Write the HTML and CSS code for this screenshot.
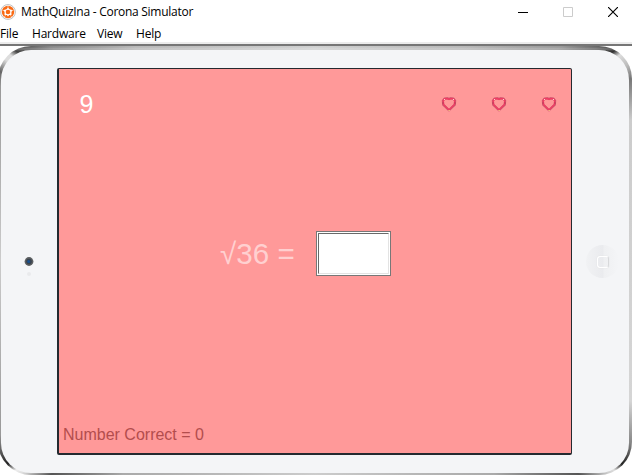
FILE: index.html
```html
<!DOCTYPE html>
<html lang="en">
<head>
<meta charset="utf-8">
<title>MathQuizIna - Corona Simulator</title>
<link rel="stylesheet" href="styles.css">
</head>
<body>
<svg class="defs" width="0" height="0" aria-hidden="true">
  <symbol id="heart" viewBox="0 0 16 16">
    <path d="M8 14.3 2.2 8.6 1.9 4.6 3.7 2.5 6.3 2.3 8 3.1 9.7 2.3 12.3 2.5 14.1 4.6 13.8 8.6Z" fill="none" stroke="#c9586d" stroke-width="2.2" stroke-linejoin="round"/>
    <path d="M8 14.1 2.5 8.5 2.2 4.7 3.8 2.7 6.2 2.5 8 3.4 9.8 2.5 12.2 2.7 13.8 4.7 13.5 8.5Z" fill="none" stroke="#f03c64" stroke-width="1.4" stroke-linejoin="round"/>
    <path d="M3 3.5h1M12 3.5h1" stroke="#ffd2d2" stroke-width="1"/>
    <path d="M2 6.5v1M14 6.5v1" stroke="#9d304b" stroke-width="1"/>
    <path d="M7.5 14.5h1.2" stroke="#ffe08c" stroke-width="1"/>
  </symbol>
</svg>
<div class="window">
  <header class="titlebar">
    <svg class="logo" width="16" height="16" viewBox="0 0 16 16">
      <circle cx="8" cy="8" r="7.4" fill="#fff" stroke="#b8b8b8" stroke-width=".9"/>
      <circle cx="8" cy="8" r="6.2" fill="#f96a14"/>
      <path d="m8 3.6 1.5 1.6 2.7.9-.8 2.3.1 2.6-2.3.1L8 12.4l-1.2-1.3-2.3-.1.1-2.6-.8-2.3 2.7-.9Z" fill="#fff"/>
      <circle cx="8" cy="8" r="2.3" fill="#f96a14"/>
      <path d="M8 1.8v2M13.7 6l-2 .8M11.5 12.8l-1.1-1.6M4.5 12.8l1.1-1.6M2.3 6l2 .8" stroke="#fff" stroke-width=".6"/>
    </svg>
    <h1 class="title">MathQuizIna - Corona Simulator</h1>
    <div class="controls">
      <svg width="10" height="10" viewBox="0 0 10 10"><path d="M0 5.5h10" stroke="#000"/></svg>
      <svg width="10" height="10" viewBox="0 0 10 10"><path d="M.5.5h9v9h-9Z" fill="none" stroke="#ccc"/></svg>
      <svg width="10" height="10" viewBox="0 0 10 10"><path d="m0 0 10 10M10 0 0 10" stroke="#000" stroke-width="1.15"/></svg>
    </div>
  </header>
  <nav class="menu"><span class="m-file">File</span><span class="m-hardware">Hardware</span><span class="m-view">View</span><span class="m-help">Help</span></nav>
  <main class="stage">
    <div class="device">
      <div class="face">
        <div class="bezel bezel-left">
          <svg width="12" height="24" viewBox="0 0 12 24">
            <circle cx="7" cy="7.5" r="4.4" fill="#5b5e60"/>
            <circle cx="7" cy="7.5" r="2.8" fill="#39434e"/>
            <circle cx="6.7" cy="7.5" r="1.5" fill="#174f8f"/>
            <circle cx="7" cy="20" r="2" fill="#e9eaec"/>
          </svg>
        </div>
        <section class="screen">
          <div class="status">
            <span class="timer">9</span>
            <div class="lives">
              <svg class="life"><use href="#heart"/></svg>
              <svg class="life"><use href="#heart"/></svg>
              <svg class="life"><use href="#heart"/></svg>
            </div>
          </div>
          <div class="question">
            <span class="equation">√36 =</span>
            <div class="answer"><div class="answer-inner"></div></div>
          </div>
          <p class="score">Number Correct = 0</p>
        </section>
        <div class="bezel bezel-right">
          <div class="home"><span class="home-mark"></span></div>
        </div>
      </div>
    </div>
  </main>
</div>
</body>
</html>
```
FILE: styles.css
```css
* { box-sizing: border-box; }
body { margin: 0; background: #fff; overflow: hidden; }
.defs { position: absolute; }
svg { display: block; flex: none; }

.window {
  display: flex;
  flex-direction: column;
  width: 632px;
  height: 475px;
  overflow: hidden;
  font-family: "Open Sans", "Noto Sans", sans-serif;
  font-size: 12px;
  color: #000;
}
.titlebar { display: flex; align-items: center; height: 24px; }
.logo { margin-right: 5px; }
.title { margin: 0; font-size: 12px; font-weight: 400; line-height: 24px; letter-spacing: -0.27px; white-space: nowrap; }
.controls { display: flex; gap: 35px; margin-left: auto; margin-right: 14px; }

.menu {
  display: flex;
  height: 22px;
  line-height: 20px;
  border-bottom: 2px solid #767676;
  background: linear-gradient(#fff 18px, #ececec 18px);
}
.menu span { flex: none; white-space: nowrap; letter-spacing: -0.2px; }
.m-file { width: 32px; }
.m-hardware { width: 65px; }
.m-view { width: 39px; }

.stage { height: 429px; }
.device {
  width: 634px;
  height: 429px;
  margin-left: -2px;
  padding: 4px 3px 2px;
  border-radius: 33px;
  background:
    linear-gradient(rgba(255, 255, 255, 0) 1px, rgba(255, 255, 255, 0.25) 3px, rgba(255, 255, 255, 0) 5px),
    conic-gradient(from 0deg at 50% 50%, #cfd0d0 0deg, #b8b8b8 35deg, #999 49deg, #666 53deg, #333 55deg, #ddd 56deg, #bbb 58deg, #777 60deg, #ccc 66deg, #d5d5d5 114deg, #888 120deg, #222 123.5deg, #ddd 125deg, #ccc 126deg, #555 129deg, #aaa 140deg, #ccc 180deg, #aaa 222deg, #555 231deg, #ddd 234deg, #eee 235deg, #222 236.5deg, #999 241deg, #ccc 270deg, #999 299deg, #666 301deg, #ddd 303deg, #ddd 304deg, #444 305deg, #888 309deg, #b8b8b8 320deg, #cfd0d0 360deg);
}
.face {
  display: flex;
  height: 423px;
  padding-top: 18px;
  border-radius: 30px;
  background: #f4f5f7;
}
.bezel { display: flex; height: 386px; align-items: center; flex: none; }
.bezel-left { width: 56px; padding-left: 21px; padding-top: 10px; }
.bezel-right { flex: 1; padding-left: 14px; padding-top: 1px; }
.home {
  display: flex;
  align-items: center;
  justify-content: center;
  width: 33px;
  height: 33px;
  border-radius: 50%;
  background: linear-gradient(90deg, #f1f2f4, #eaebee 50%, #eff0f2 56%, #f4f5f7);
}
.home-mark { width: 12px; height: 12px; border: 1px solid #fff; border-right-color: #d8d9db; border-bottom-color: #fff; border-radius: 3px; box-shadow: 0 0 1px #d0d1d3; }

.screen {
  display: flex;
  flex-direction: column;
  flex: none;
  width: 515px;
  height: 387px;
  border: solid #242a30;
  border-width: 1px 1px 2px 2px;
  border-radius: 2px;
  background: #ff9999;
  font-family: "Liberation Sans", Arial, sans-serif;
}
.status { display: flex; justify-content: space-between; height: 70px; padding: 20px 14px 0 20.5px; }
.timer { font-size: 25px; line-height: 30px; color: #fff; }
.lives { display: flex; gap: 34px; padding-top: 7px; }
.life { width: 16px; height: 16px; }
.question { display: flex; height: 136px; padding: 92px 0 0 161px; }
.equation { flex: none; width: 96px; color: #ffd0d0; font-size: 29.6px; line-height: 46px; white-space: nowrap; }
.answer { width: 75px; height: 45px; padding: 1px; border: 1px solid #777; background: #fff; }
.answer-inner { height: 100%; border: 1px solid; border-color: #696969 #e3e3e3 #e3e3e3 #696969; }
.score { margin: auto 0 8px 4px; font-size: 16px; line-height: 20px; color: #b34d4d; white-space: nowrap; }
```
